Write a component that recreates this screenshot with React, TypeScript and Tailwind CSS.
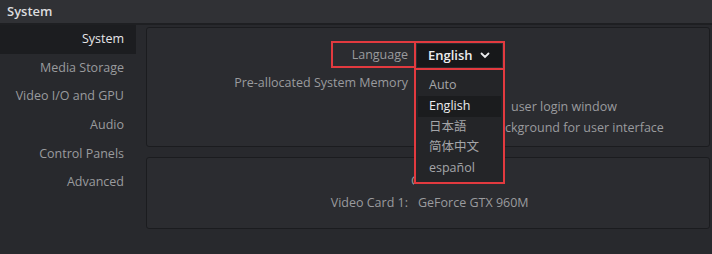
import React from "react";

const sideItems = [
  "System",
  "Media Storage",
  "Video I/O and GPU",
  "Audio",
  "Control Panels",
  "Advanced",
];

const languages = ["Auto", "English", "日本語", "简体中文", "español"];

// DaVinci-like preferences page with the language dropdown open
export default function App() {
  return (
    <div
      className="relative w-[712px] h-[254px] overflow-hidden bg-[#28292d] text-[12.5px] text-[#9a9b9e]"
      style={{ fontFamily: '"Open Sans", "Noto Sans CJK SC", sans-serif' }}
    >
      {/* title bar */}
      <div className="h-[23px] bg-[#303135] px-[7px] flex items-center text-[13px] font-semibold text-[#dcdcde]">
        System
      </div>
      <div className="h-[2px] bg-[#1e1f22]" />

      <div className="flex">
        {/* sidebar */}
        <div className="w-[136px] flex flex-col">
          {sideItems.map((item, i) => (
            <div
              key={item}
              className={
                "h-[28.7px] pr-[12px] flex items-center justify-end " +
                (i === 0 ? "bg-[#1c1d20] text-[#e6e6e8]" : "")
              }
            >
              {item}
            </div>
          ))}
        </div>

        {/* panels */}
        <div className="flex-1 ml-[10px] mr-[2px] pt-[2px] flex flex-col gap-[10px]">
          <div className="h-[120px] rounded-[3px] border border-[#1b1c1f] bg-[#2b2c30] pt-[13px]">
            <div className="flex items-center h-[28px]">
              <div className="w-[261px] text-right">Language</div>
            </div>
            <div className="flex items-center h-[28px]">
              <div className="w-[261px] text-right">Pre-allocated System Memory</div>
            </div>
            {/* rows partly hidden by the open list */}
            <div className="flex items-center h-[21px]">
              <div className="ml-[364px]">user login window</div>
            </div>
            <div className="flex items-center h-[21px]">
              <div className="ml-[358px]">ckground for user interface</div>
            </div>
          </div>

          <div className="h-[72px] rounded-[3px] border border-[#1b1c1f] bg-[#2b2c30] pt-[13px]">
            <div className="flex items-center h-[20px]">
              <div className="ml-[264px] w-[3px] overflow-hidden">C</div>
            </div>
            <div className="flex items-center h-[24px]">
              <div className="w-[261px] text-right">Video Card 1:</div>
              <div className="ml-[10px]">GeForce GTX 960M</div>
            </div>
          </div>
        </div>
      </div>

      {/* highlighted Language label */}
      <div className="absolute left-[331px] top-[41px] w-[85px] h-[27px] border-2 border-[#e23a3f]" />

      {/* dropdown button */}
      <div className="absolute left-[414px] top-[41px] w-[91px] h-[29px] border-2 border-[#e23a3f] p-[1px]">
        <div className="h-full bg-[#17181a] flex items-center pl-[11px] pr-[12px] justify-between text-[13px] font-semibold text-[#ececee]">
          <span>English</span>
          <svg width="10" height="7" viewBox="0 0 10 7" fill="none">
            <path d="M1.5 1.5 L5 5 L8.5 1.5" stroke="#ececee" strokeWidth="1.8" strokeLinecap="round" />
          </svg>
        </div>
      </div>

      {/* dropdown list */}
      <div className="absolute left-[414px] top-[68px] w-[91px] h-[116px] border-2 border-[#e23a3f] bg-[#242528] pt-[5px] px-[2px]">
        {languages.map((lang) => (
          <div
            key={lang}
            className={
              "h-[20.8px] pl-[11px] flex items-center " +
              (lang === "English" ? "bg-[#1b1c1e] text-[#ececee]" : "text-[#a4a5a8]")
            }
          >
            {lang}
          </div>
        ))}
      </div>
    </div>
  );
}
